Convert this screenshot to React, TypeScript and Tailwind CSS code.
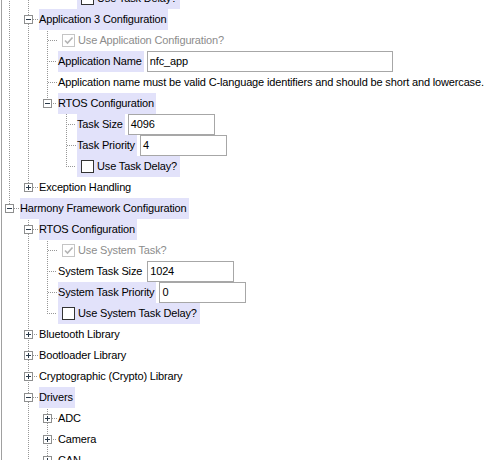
import React from 'react';

type Row = {
  level: number;
  kind: 'node' | 'check' | 'field' | 'text';
  label: string;
  hl?: boolean;
  expanded?: boolean;
  checked?: boolean;
  disabled?: boolean;
  value?: string;
  wide?: boolean;
};

const rows: Row[] = [
  { level: 3, kind: 'check', label: 'Use Task Delay?', hl: true },
  { level: 1, kind: 'node', label: 'Application 3 Configuration', expanded: true, hl: true },
  { level: 2, kind: 'check', label: 'Use Application Configuration?', disabled: true, checked: true },
  { level: 2, kind: 'field', label: 'Application Name', value: 'nfc_app', wide: true, hl: true },
  { level: 2, kind: 'text', label: 'Application name must be valid C-language identifiers and should be short and lowercase.' },
  { level: 2, kind: 'node', label: 'RTOS Configuration', expanded: true, hl: true },
  { level: 3, kind: 'field', label: 'Task Size', value: '4096', hl: true },
  { level: 3, kind: 'field', label: 'Task Priority', value: '4', hl: true },
  { level: 3, kind: 'check', label: 'Use Task Delay?', hl: true },
  { level: 1, kind: 'node', label: 'Exception Handling', expanded: false },
  { level: 0, kind: 'node', label: 'Harmony Framework Configuration', expanded: true, hl: true },
  { level: 1, kind: 'node', label: 'RTOS Configuration', expanded: true, hl: true },
  { level: 2, kind: 'check', label: 'Use System Task?', disabled: true, checked: true },
  { level: 2, kind: 'field', label: 'System Task Size', value: '1024' },
  { level: 2, kind: 'field', label: 'System Task Priority', value: '0', hl: true },
  { level: 2, kind: 'check', label: 'Use System Task Delay?', hl: true },
  { level: 1, kind: 'node', label: 'Bluetooth Library', expanded: false },
  { level: 1, kind: 'node', label: 'Bootloader Library', expanded: false },
  { level: 1, kind: 'node', label: 'Cryptographic (Crypto) Library', expanded: false },
  { level: 1, kind: 'node', label: 'Drivers', expanded: true, hl: true },
  { level: 2, kind: 'node', label: 'ADC', expanded: false },
  { level: 2, kind: 'node', label: 'Camera', expanded: false },
  { level: 2, kind: 'node', label: 'CAN', expanded: false },
];

const ROW_H = 21;
const TOP = -12;
const START = [20, 39, 58, 77];
const PAD = ['pl-[18px]', 'pl-[37px]', 'pl-[56px]', 'pl-[75px]'];
const LINE = '#979797';

function passes(i: number, l: number): boolean {
  for (let j = i + 1; j < rows.length; j++) {
    if (rows[j].level <= l) return rows[j].level === l;
  }
  return l > 0;
}

function mod2(n: number) {
  return ((n % 2) + 2) % 2;
}

function VDots({ x, a, b }: { x: number; a: number; b: number }) {
  const s = a + mod2(a + x);
  if (b <= s) return null;
  return <line x1={x + 0.5} y1={s} x2={x + 0.5} y2={b} stroke={LINE} strokeWidth={1} strokeDasharray="1 1" />;
}

function HDots({ y, a, b }: { y: number; a: number; b: number }) {
  const s = a + mod2(a + y);
  if (b <= s) return null;
  return <line x1={s} y1={y + 0.5} x2={b} y2={y + 0.5} stroke={LINE} strokeWidth={1} strokeDasharray="1 1" />;
}

function TreeLines() {
  const els: React.ReactNode[] = [];
  rows.forEach((r, i) => {
    const top = TOP + ROW_H * i;
    const bottom = top + ROW_H;
    const cy = top + 10;
    for (let l = 0; l < r.level; l++) {
      if (passes(i, l)) els.push(<VDots key={`v${i}-${l}`} x={START[l] - 11} a={top} b={bottom} />);
    }
    const x = START[r.level] - 11;
    const next = passes(i, r.level);
    if (r.kind === 'node') {
      els.push(<VDots key={`o${i}`} x={x} a={top} b={cy - 4} />);
      if (next) els.push(<VDots key={`n${i}`} x={x} a={cy + 5} b={bottom} />);
      els.push(<HDots key={`h${i}`} y={cy} a={x + 5} b={START[r.level] - 1} />);
      els.push(
        <g key={`b${i}`}>
          <rect x={x - 4 + 0.5} y={cy - 4 + 0.5} width={8} height={8} fill="#ffffff" stroke="#8e8f8f" strokeWidth={1} />
          <line x1={x - 2} y1={cy + 0.5} x2={x + 3} y2={cy + 0.5} stroke="#2a3a4a" strokeWidth={1} />
          {!r.expanded && <line x1={x + 0.5} y1={cy - 2} x2={x + 0.5} y2={cy + 3} stroke="#2a3a4a" strokeWidth={1} />}
        </g>
      );
    } else {
      els.push(<VDots key={`o${i}`} x={x} a={top} b={next ? bottom : cy + 1} />);
      els.push(<HDots key={`h${i}`} y={cy} a={x + 1} b={START[r.level] - 1} />);
    }
  });
  return (
    <svg className="absolute left-0 top-0 pointer-events-none" width={494} height={460}>
      <g transform="translate(-2,0)">{els}</g>
    </svg>
  );
}

function CheckBox({ checked, disabled }: { checked?: boolean; disabled?: boolean }) {
  return (
    <svg width={13} height={13} className="shrink-0 ml-[4px]">
      <rect x={0.5} y={0.5} width={12} height={12} fill="#ffffff" stroke={disabled ? '#c5c5c5' : '#333333'} />
      {checked && (
        <path d="M3 6.5 L5.5 9 L10.5 3.5" fill="none" stroke={disabled ? '#b4b4b4' : '#333333'} strokeWidth={1.6} />
      )}
    </svg>
  );
}

function RowView({ r }: { r: Row }) {
  const bg = r.hl ? 'bg-[#e2e2fa]' : '';
  const pad = PAD[r.level];
  if (r.kind === 'check') {
    return (
      <div className={`flex h-[21px] shrink-0 items-center ${pad}`}>
        <div className={`flex h-[21px] items-center pr-[3px] ${bg}`}>
          <CheckBox checked={r.checked} disabled={r.disabled} />
          <span className={`ml-[3px] whitespace-nowrap ${r.disabled ? 'text-[#8c8c8c]' : 'text-black'}`}>{r.label}</span>
        </div>
      </div>
    );
  }
  if (r.kind === 'field') {
    return (
      <div className={`flex h-[21px] shrink-0 items-center ${pad}`}>
        <span className={`flex h-[21px] items-center pr-[2px] whitespace-nowrap ${bg}`}>{r.label}</span>
        <div
          className={`ml-[3px] flex h-[21px] items-center border border-[#a7a7a7] bg-white pl-[2px] ${r.wide ? 'w-[246px]' : 'w-[87px]'}`}
        >
          {r.value}
        </div>
      </div>
    );
  }
  return (
    <div className={`flex h-[21px] shrink-0 items-center ${pad}`}>
      <span className={`flex h-[21px] items-center pr-[2px] whitespace-nowrap ${bg}`}>{r.label}</span>
    </div>
  );
}

export default function App() {
  return (
    <div className="w-[496px] h-[460px] overflow-hidden bg-white font-['Liberation_Sans',Arial,sans-serif] text-[11px] tracking-[-0.15px] text-black">
      <div className="relative ml-px flex h-[460px] flex-col border-l border-[#a0a0a0]">
        <div className="mt-[-12px] flex shrink-0 flex-col">
          {rows.map((r, i) => (
            <RowView key={i} r={r} />
          ))}
        </div>
        <TreeLines />
      </div>
    </div>
  );
}
